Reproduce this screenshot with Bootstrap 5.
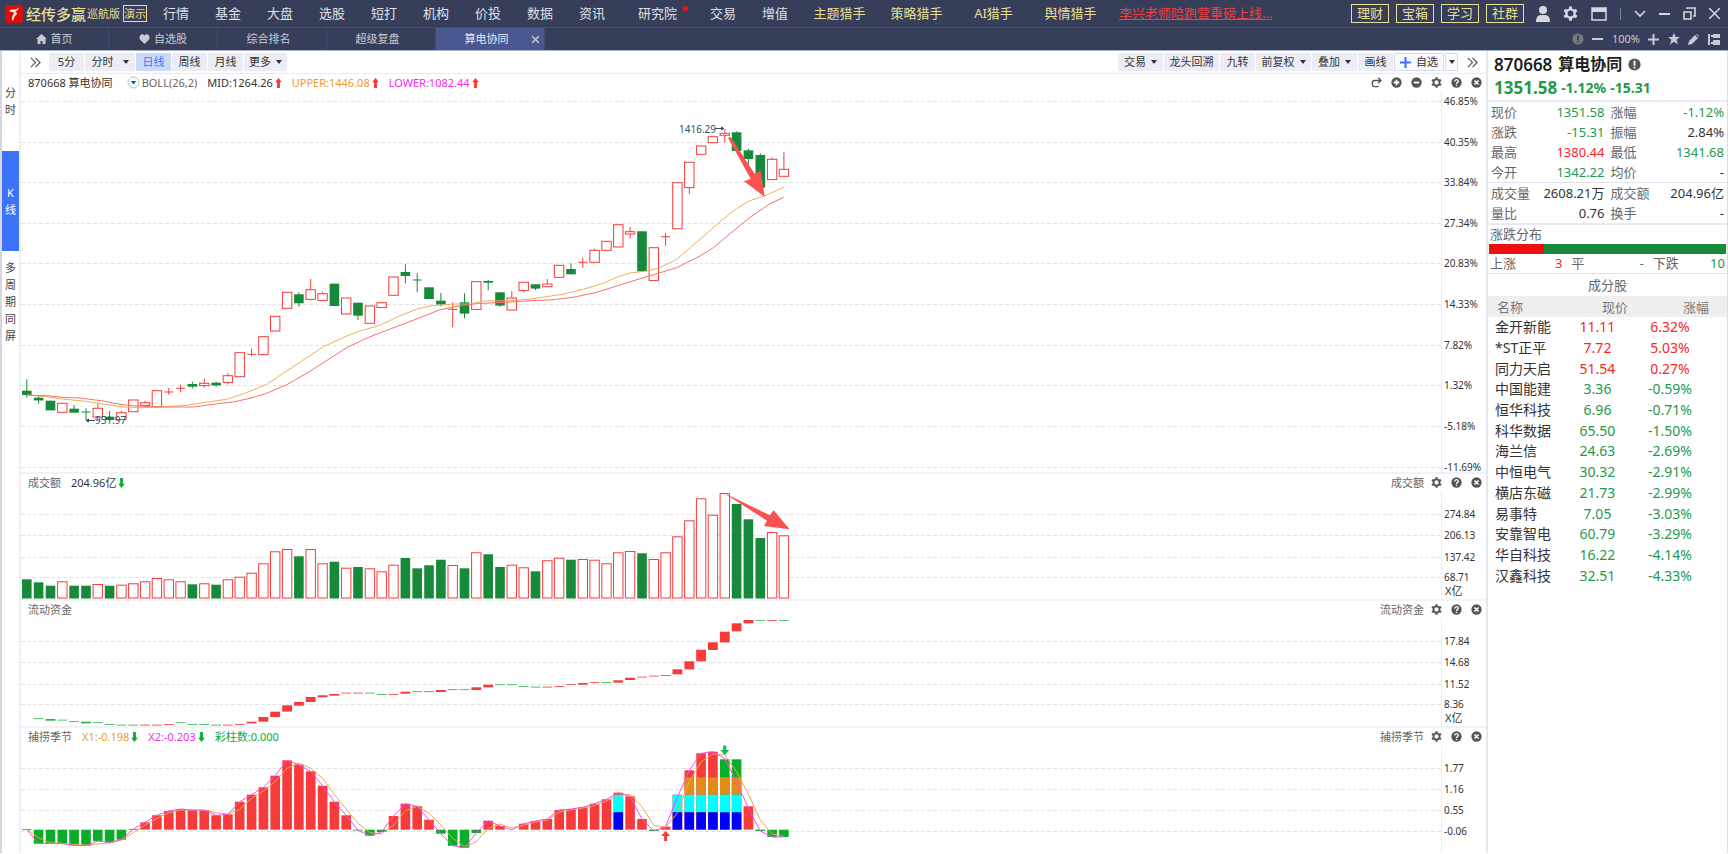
<!DOCTYPE html>
<html lang="zh-CN">
<head>
<meta charset="utf-8">
<meta name="viewport" content="width=device-width, initial-scale=1">
<title>算电协同 870668</title>
<link href="https://cdn.jsdelivr.net/npm/bootstrap@5.3.0/dist/css/bootstrap.min.css" rel="stylesheet">
<style>
  :root { --up:#f73a3a; --down:#168a3a; --navy:#373e5a; --line:#e9eaf3; --gold:#e9df93; }
  body { font-family:"Noto Sans","Noto Sans CJK SC",sans-serif; font-size:13px; line-height:20px; color:#333; background:#fff; }
  button { font-family:inherit; }
  a { text-decoration:none; }
  svg { display:block; flex-shrink:0; }
  .plain { border:0; background:none; padding:0; color:inherit; line-height:inherit; }

  .topbar { height:27px; background:var(--navy); color:#dfe1e8; }
  .topbar a { color:inherit; line-height:27px; text-align:center; }
  .brand { width:150px; padding-left:5px; color:var(--gold); white-space:nowrap; }
  .brand-name { font-size:15px; font-weight:500; margin-left:3px; }
  .brand-ed { font-size:11px; margin-left:1px; }
  .brand-demo { font-size:11px; line-height:15px; border:1px solid var(--gold); margin-left:3px; }
  .w-nav { width:52px; }
  .w-nav3 { width:79px; }
  .w-nav4 { width:77px; color:var(--gold) !important; }
  .promo { color:#ee4040 !important; text-decoration:underline; margin-left:10px; }
  .red-dot { position:absolute; top:6px; right:9px; width:5px; height:5px; border-radius:50%; background:#f01010; }
  .gold-box { gap:7px; }
  .gold-btn { width:38px; height:19px; border:1px solid var(--gold); background:none; color:var(--gold); padding:0; line-height:17px; font-size:13px; }
  .win-icons { width:204px; padding:0 8px 0 12px; color:#d6d8de; }
  .tabbar { height:24px; background:var(--navy); border-top:1px solid #414a70; border-bottom:1px solid #aab0cb; color:#c9cbd3; font-size:11px; line-height:22px; }
  .tabbar a { width:109px; color:inherit; border-right:1px solid #414a70; }
  .tabbar a.text-center { padding-right:7px; }
  .tabbar a.on { background:#4b578f; color:#e8eaf4; position:relative; }
  .tab-x { position:absolute; right:6px; top:0; }
  .tab-tools { width:160px; padding-right:8px; padding-left:4px; }

  .side { width:21px; border-left:2px solid #d5d6e0; border-right:2px solid #eeeff6; }
  .side button { height:100px; font-size:11px; line-height:17px; color:#444; display:flex; flex-direction:column; align-items:center; justify-content:center; }
  .side button.on { background:#3b74fa; color:#fff; }

  .toolbar { height:23px; border-bottom:1px solid var(--line); font-size:11px; padding-left:9px; }
  .btn-row { gap:1px; }
  .tbtn { border:0; background:#ecedf4; color:#333; height:18px; line-height:18px; padding:0; font-size:11px; white-space:nowrap; display:flex; align-items:center; justify-content:center; gap:5px; }
  .tbtn.on { background:#ccdaf9; color:#3b74fa; }
  .caret { width:0; height:0; border:3px solid transparent; border-top:4px solid #333; border-bottom:0; }
  .t35 { width:35px; } .t43 { width:43px; } .t45 { width:45px; } .t50 { width:50px; } .t55 { width:55px; } .t13 { width:13px; }
  .tbtn.framed { border:1px solid #dadce8; background:#f8f9fc; }

  .panel { border-bottom:2px solid #f2f3f8; }
  .panel:last-child { border-bottom:0; }
  .phead { height:17px; font-size:11px; line-height:17px; padding:0 4px 0 7px; color:#666; }
  .vals { gap:10px; }
  .vals > span { display:flex; align-items:center; gap:2px; }
  .picons { gap:9px; color:#555; }
  .picons .lb { margin-right:-2px; }
  .plot { flex:1 1 0; min-width:0; }
  .axis { width:45px; border-left:1px solid #eceef4; overflow:visible; }
  .h-main { height:381px; }
  .h-sub { height:108px; }
  .axis text { font-size:10px; fill:#333; }
  .axis .unit { font-size:11px; }
  .grid-ln { stroke:#e4e4e6; stroke-dasharray:4 2; }
  .note { font-size:10px; fill:#31506b; }
  .c-mid { color:#333; } .c-or { color:#eb9c2d; } .c-mg { color:#f42af0; } .c-gn { color:#0aad32; } .c-rd { color:#f33; }

  .quote { width:242px; border-left:2px solid #e6e7f0; border-right:1px solid #dcdde6; }
  .q-top { height:51px; padding:2px 6px 0; border-bottom:2px solid var(--line); }
  .q-head { gap:6px; }
  .q-code { font-size:17px; font-weight:600; line-height:23px; color:#222; }
  .q-name { font-size:16px; font-weight:600; line-height:23px; color:#222; }
  .q-price { font-size:17px; font-weight:700; line-height:23px; }
  .q-chg { font-size:14px; font-weight:700; line-height:23px; }
  .gn { color:#1f994a; } .rd { color:#fb2626; } .lb { color:#666; }
  .q-tab { width:100%; table-layout:fixed; }
  .q-tab td, .q-tab th { padding:0 3px; height:20px; line-height:20px; font-weight:400; white-space:nowrap; }
  .q-tab th { width:45px; }
  .q-tab td { text-align:right; }
  .ln1 { border-bottom:1px solid #dfe1ec; }
  .ln2 { border-bottom:2px solid var(--line); }
  .dist-title { line-height:19px; padding-left:2px; }
  .dist-bar { height:10px; margin:0 1px; background:var(--down); }
  .dist-bar div { height:10px; background:#ee1010; }
  .dist { margin:0 2px; gap:9px; height:19px; line-height:18px; }
  .cons-title { height:22px; line-height:23px; }
  .cons { width:100%; table-layout:fixed; height:290px; font-size:14px; }
  .cons th { height:21px; background:#efefef; font-size:13px; font-weight:400; color:#777; padding:0 18px 0 0; text-align:right; line-height:20px; }
  .cons th:first-child { text-align:left; padding-left:9px; }
  .cons th:nth-child(2) { padding-right:7px; }
  .cons td { padding:0; text-align:center; line-height:20px; white-space:nowrap; }
  .cons td:first-child { text-align:left; padding-left:7px; }
  .cons td:nth-child(3) { padding-right:22px; }
  .col-name { width:72px; } .col-price { width:75px; }
</style>
</head>
<body>

<svg width="0" height="0" class="position-absolute" aria-hidden="true">
  <symbol id="i-gear" viewBox="0 0 16 16"><circle cx="8" cy="8" r="4.400" fill="none" stroke="currentColor" stroke-width="2.600"/><path stroke="currentColor" stroke-width="3.200" d="M8 .4v3M8 12.600v3M1.400 4.200l2.600 1.500M12 10.300l2.600 1.500M1.400 11.800l2.600-1.500M12 5.700l2.600-1.500"/></symbol>
  <symbol id="i-plus" viewBox="0 0 16 16"><circle cx="8" cy="8" r="7.500" fill="currentColor"/><path stroke="#fff" stroke-width="2.600" d="M8 4v8M4 8h8"/></symbol>
  <symbol id="i-minus" viewBox="0 0 16 16"><circle cx="8" cy="8" r="7.500" fill="currentColor"/><path stroke="#fff" stroke-width="2.600" d="M4 8h8"/></symbol>
  <symbol id="i-close" viewBox="0 0 16 16"><circle cx="8" cy="8" r="7.500" fill="currentColor"/><path stroke="#fff" stroke-width="2.200" d="M5 5l6 6M11 5l-6 6"/></symbol>
  <symbol id="i-help" viewBox="0 0 16 16"><circle cx="8" cy="8" r="7.500" fill="currentColor"/><path fill="none" stroke="#fff" stroke-width="2" d="M5.500 6.500c0-3.500 5-3.300 5-.4C10.500 8 8 7.900 8 10M8 11.200v2"/></symbol>
  <symbol id="i-info" viewBox="0 0 16 16"><circle cx="8" cy="8" r="7.500" fill="currentColor"/><path stroke="#fff" stroke-width="2.200" d="M8 3.500v6M8 10.800v2"/></symbol>
  <symbol id="i-info-dim" viewBox="0 0 16 16"><circle cx="8" cy="8" r="7.500" fill="currentColor"/><path stroke="#373e5a" stroke-width="2.200" d="M8 3.500v6M8 10.800v2"/></symbol>
  <symbol id="i-redo" viewBox="0 0 16 16"><path fill="none" stroke="currentColor" stroke-width="2" d="M14 5H5Q2 5 2 8v3q0 3 3 3h6M10.500 1L14.500 5L10.500 9"/></symbol>
  <symbol id="i-up" viewBox="0 0 8 12"><path fill="currentColor" d="M4 0L8 5H5.700V12H2.300V5H0Z"/></symbol>
  <symbol id="i-down" viewBox="0 0 8 12"><path fill="currentColor" d="M4 12L8 7H5.700V0H2.300V7H0Z"/></symbol>
  <symbol id="i-more" viewBox="0 0 12 12"><path fill="none" stroke="currentColor" stroke-width="1.300" d="M1 1l5 5-5 5M6 1l5 5-5 5"/></symbol>
</svg>

<header>
  <nav class="topbar d-flex align-items-center text-nowrap">
    <div class="brand d-flex align-items-center">
      <svg width="18" height="18" viewBox="0 0 18 18"><rect width="18" height="18" rx="3" fill="#d90d0d"/><path d="M4 6c3-3 5 0 10-3-1 2-2 3-4 3 3 2 2 4 0 5-1 1-1 3-2 5-2-2-1-4 0-6 1-1 1-2 0-3-1 0-2 0-4-1z" fill="#fbe9c6"/></svg>
      <span class="brand-name">经传多赢</span><span class="brand-ed">巡航版</span><span class="brand-demo">演示</span>
    </div>
    <a href="#" class="w-nav">行情</a><a href="#" class="w-nav">基金</a><a href="#" class="w-nav">大盘</a><a href="#" class="w-nav">选股</a><a href="#" class="w-nav">短打</a><a href="#" class="w-nav">机构</a><a href="#" class="w-nav">价投</a><a href="#" class="w-nav">数据</a><a href="#" class="w-nav">资讯</a>
    <a href="#" class="w-nav3 position-relative">研究院<span class="red-dot"></span></a>
    <a href="#" class="w-nav">交易</a><a href="#" class="w-nav">增值</a>
    <a href="#" class="w-nav4">主题猎手</a><a href="#" class="w-nav4">策略猎手</a><a href="#" class="w-nav4">AI猎手</a><a href="#" class="w-nav4">舆情猎手</a>
    <a href="#" class="promo">李兴老师陪跑营重磅上线...</a>
    <div class="gold-box d-flex ms-auto">
      <button class="gold-btn">理财</button><button class="gold-btn">宝箱</button><button class="gold-btn">学习</button><button class="gold-btn">社群</button>
    </div>
    <div class="win-icons d-flex align-items-center justify-content-between">
      <button class="plain" aria-label="用户"><svg width="14" height="16" viewBox="0 0 14 16" fill="currentColor"><circle cx="7" cy="4" r="4"/><path d="M0 16q0-7 5-7h4q5 0 5 7z"/></svg></button>
      <button class="plain" aria-label="设置"><svg width="15" height="15"><use href="#i-gear"/></svg></button>
      <button class="plain" aria-label="窗口"><svg width="16" height="14" viewBox="0 0 16 14"><path fill="none" stroke="currentColor" stroke-width="1.500" d="M1 1h14v12H1z"/><path fill="currentColor" d="M1 1h14v4H1z"/></svg></button>
      <svg width="1" height="12"><path stroke="#777e97" stroke-width="2" d="M0 0v12"/></svg>
      <button class="plain" aria-label="展开"><svg width="12" height="8" viewBox="0 0 12 8"><path fill="none" stroke="currentColor" stroke-width="1.600" d="M1 1l5 5 5-5"/></svg></button>
      <button class="plain" aria-label="最小化"><svg width="11" height="8"><path stroke="currentColor" stroke-width="2" d="M0 4h11"/></svg></button>
      <button class="plain" aria-label="还原"><svg width="13" height="13" viewBox="0 0 13 13"><path fill="none" stroke="currentColor" stroke-width="1.600" d="M1 5h7v7H1zM4 2V1h8v8h-2"/></svg></button>
      <button class="plain" aria-label="关闭"><svg width="11" height="11" viewBox="0 0 11 11"><path stroke="currentColor" stroke-width="1.500" d="M0 0l11 11M11 0L0 11"/></svg></button>
    </div>
  </nav>
  <nav class="tabbar d-flex">
    <a href="#" class="d-flex justify-content-center align-items-center gap-1"><svg width="11" height="10" viewBox="0 0 11 10" fill="currentColor"><path d="M5.500 0L11 5H9.500v5H6.500V7h-2v3H1.500V5H0z"/></svg>首页</a>
    <a href="#" class="d-flex justify-content-center align-items-center gap-1"><svg width="11" height="10" viewBox="0 0 11 10" fill="currentColor"><path d="M5.500 10L1 5.500C-1 2 3-2 5.500 1.500 8-2 12 2 10 5.500z"/></svg>自选股</a>
    <a href="#" class="text-center">综合排名</a>
    <a href="#" class="text-center">超级复盘</a>
    <span class="position-relative d-flex"><a href="#" class="on text-center">算电协同</a><button class="plain tab-x" aria-label="关闭标签"><svg width="7" height="22" viewBox="0 0 7 22"><path stroke="currentColor" stroke-width="1.300" d="M0 8l7 7M7 8l-7 7"/></svg></button></span>
    <div class="tab-tools ms-auto d-flex align-items-center justify-content-between">
      <svg width="12" height="12" color="#77777a"><use href="#i-info-dim"/></svg>
      <button class="plain" aria-label="缩小"><svg width="11" height="8"><path stroke="currentColor" stroke-width="2" d="M0 4h11"/></svg></button>
      <span>100%</span>
      <button class="plain" aria-label="放大"><svg width="11" height="11"><path stroke="currentColor" stroke-width="2" d="M0 5.500h11M5.500 0v11"/></svg></button>
      <button class="plain" aria-label="收藏"><svg width="12" height="12" viewBox="0 0 12 12" fill="currentColor"><path d="M6 0l1.800 4H12L8.600 6.800 10 11.500 6 8.700 2 11.500 3.400 6.800 0 4h4.200z"/></svg></button>
      <button class="plain" aria-label="编辑"><svg width="11" height="11" viewBox="0 0 11 11" fill="currentColor"><path d="M0 11l1-4 6-6 3 3-6 6zM8 0h1l2 2v1z"/></svg></button>
      <button class="plain" aria-label="布局"><svg width="12" height="11" viewBox="0 0 12 11" fill="currentColor"><path d="M0 0h2v11H0zM5 0h7v4H5zM5 6h7v5H5zM3 1h2v2H3zM3 8h2v2H3z"/></svg></button>
    </div>
  </nav>
</header>

<main class="d-flex">
  <aside class="side d-flex flex-column">
    <button class="plain"><span>分</span><span>时</span></button>
    <button class="plain on"><span>K</span><span>线</span></button>
    <button class="plain"><span>多</span><span>周</span><span>期</span><span>同</span><span>屏</span></button>
  </aside>

  <section class="flex-fill" style="min-width:0">
    <div class="toolbar d-flex align-items-center">
      <svg class="me-2" width="11" height="11" color="#555"><use href="#i-more"/></svg>
      <div class="btn-row d-flex">
        <button class="tbtn t35">5分</button>
        <button class="tbtn t50">分时<i class="caret ms-1"></i></button>
        <button class="tbtn t35 on">日线</button>
        <button class="tbtn t35">周线</button>
        <button class="tbtn t35">月线</button>
        <button class="tbtn t43">更多<i class="caret"></i></button>
      </div>
      <div class="btn-row d-flex ms-auto align-items-center">
        <button class="tbtn t45">交易<i class="caret"></i></button>
        <button class="tbtn t55">龙头回溯</button>
        <button class="tbtn t35">九转</button>
        <button class="tbtn t55">前复权<i class="caret"></i></button>
        <button class="tbtn t45">叠加<i class="caret"></i></button>
        <button class="tbtn t35">画线</button>
        <button class="tbtn t50 framed"><svg width="11" height="11"><path stroke="#3b74fa" stroke-width="2" d="M0 5.500h11M5.500 0v11"/></svg>自选</button>
        <button class="tbtn t13 framed" aria-label="自选菜单"><i class="caret"></i></button>
        <svg class="ms-2 me-2" width="11" height="11" color="#555"><use href="#i-more"/></svg>
      </div>
    </div>

    <div class="panel">
      <div class="phead d-flex align-items-center">
        <div class="vals d-flex align-items-center">
          <span class="c-mid">870668 算电协同</span>
          <span><svg class="ms-1" width="13" height="13" viewBox="0 0 13 13"><circle cx="6.500" cy="6.500" r="5.500" fill="#f3fafc" stroke="#a9cbd8"/><path d="M4 5h5L6.500 8.500z" fill="#2c4a60"/></svg>BOLL(26,2)</span>
          <span class="c-mid">MID:1264.26<svg class="c-rd" width="7" height="10"><use href="#i-up"/></svg></span>
          <span class="c-or">UPPER:1446.08<svg class="c-rd" width="7" height="10"><use href="#i-up"/></svg></span>
          <span class="c-mg">LOWER:1082.44<svg class="c-rd" width="7" height="10"><use href="#i-up"/></svg></span>
        </div>
        <div class="picons d-flex ms-auto">
          <button class="plain" aria-label="重做"><svg width="11" height="11"><use href="#i-redo"/></svg></button>
          <button class="plain" aria-label="增加"><svg width="11" height="11"><use href="#i-plus"/></svg></button>
          <button class="plain" aria-label="减少"><svg width="11" height="11"><use href="#i-minus"/></svg></button>
          <button class="plain" aria-label="设置"><svg width="11" height="11"><use href="#i-gear"/></svg></button>
          <button class="plain" aria-label="帮助"><svg width="11" height="11"><use href="#i-help"/></svg></button>
          <button class="plain" aria-label="关闭"><svg width="11" height="11"><use href="#i-close"/></svg></button>
        </div>
      </div>
      <div class="d-flex"><svg class="plot h-main" id="k-plot"></svg><svg class="axis h-main" id="k-axis"></svg></div>
    </div>

    <div class="panel">
      <div class="phead d-flex align-items-center">
        <div class="vals d-flex align-items-center"><span>成交额</span><span class="c-mid">204.96亿<svg class="c-gn" width="7" height="10"><use href="#i-down"/></svg></span></div>
        <div class="picons d-flex ms-auto align-items-center"><span class="lb">成交额</span>
          <button class="plain" aria-label="设置"><svg width="11" height="11"><use href="#i-gear"/></svg></button>
          <button class="plain" aria-label="帮助"><svg width="11" height="11"><use href="#i-help"/></svg></button>
          <button class="plain" aria-label="关闭"><svg width="11" height="11"><use href="#i-close"/></svg></button>
        </div>
      </div>
      <div class="d-flex"><svg class="plot h-sub" id="v-plot"></svg><svg class="axis h-sub" id="v-axis"></svg></div>
    </div>

    <div class="panel">
      <div class="phead d-flex align-items-center">
        <span>流动资金</span>
        <div class="picons d-flex ms-auto align-items-center"><span class="lb">流动资金</span>
          <button class="plain" aria-label="设置"><svg width="11" height="11"><use href="#i-gear"/></svg></button>
          <button class="plain" aria-label="帮助"><svg width="11" height="11"><use href="#i-help"/></svg></button>
          <button class="plain" aria-label="关闭"><svg width="11" height="11"><use href="#i-close"/></svg></button>
        </div>
      </div>
      <div class="d-flex"><svg class="plot h-sub" id="f-plot"></svg><svg class="axis h-sub" id="f-axis"></svg></div>
    </div>

    <div class="panel">
      <div class="phead d-flex align-items-center">
        <div class="vals d-flex align-items-center">
          <span>捕捞季节</span>
          <span class="c-or">X1:-0.198<svg class="c-gn" width="7" height="10"><use href="#i-down"/></svg></span>
          <span class="c-mg">X2:-0.203<svg class="c-gn" width="7" height="10"><use href="#i-down"/></svg></span>
          <span class="c-gn">彩柱数:0.000</span>
        </div>
        <div class="picons d-flex ms-auto align-items-center"><span class="lb">捕捞季节</span>
          <button class="plain" aria-label="设置"><svg width="11" height="11"><use href="#i-gear"/></svg></button>
          <button class="plain" aria-label="帮助"><svg width="11" height="11"><use href="#i-help"/></svg></button>
          <button class="plain" aria-label="关闭"><svg width="11" height="11"><use href="#i-close"/></svg></button>
        </div>
      </div>
      <div class="d-flex"><svg class="plot h-sub" id="s-plot"></svg><svg class="axis h-sub" id="s-axis"></svg></div>
    </div>
  </section>

  <aside class="quote flex-shrink-0">
    <div class="q-top">
      <div class="q-head d-flex align-items-center"><span class="q-code">870668</span><span class="q-name">算电协同</span><svg width="13" height="13" color="#555"><use href="#i-info"/></svg></div>
      <div class="d-flex gap-1 gn"><span class="q-price">1351.58</span><span class="q-chg">-1.12%</span><span class="q-chg">-15.31</span></div>
    </div>
    <div class="ln1"><table class="q-tab"><tbody>
      <tr><th class="lb" scope="row">现价</th><td class="gn">1351.58</td><th class="lb" scope="row">涨幅</th><td class="gn">-1.12%</td></tr>
      <tr><th class="lb" scope="row">涨跌</th><td class="gn">-15.31</td><th class="lb" scope="row">振幅</th><td>2.84%</td></tr>
      <tr><th class="lb" scope="row">最高</th><td class="rd">1380.44</td><th class="lb" scope="row">最低</th><td class="gn">1341.68</td></tr>
      <tr><th class="lb" scope="row">今开</th><td class="gn">1342.22</td><th class="lb" scope="row">均价</th><td>-</td></tr>
    </tbody></table></div>
    <div class="ln2"><table class="q-tab"><tbody>
      <tr><th class="lb" scope="row">成交量</th><td>2608.21万</td><th class="lb" scope="row">成交额</th><td>204.96亿</td></tr>
      <tr><th class="lb" scope="row">量比</th><td>0.76</td><th class="lb" scope="row">换手</th><td>-</td></tr>
    </tbody></table></div>
    <div class="dist-title lb">涨跌分布</div>
    <div class="dist-bar"><div style="width:23%"></div></div>
    <div class="dist d-flex">
      <div class="d-flex flex-fill w-100 justify-content-between"><span class="lb">上涨</span><span class="rd">3</span></div>
      <div class="d-flex flex-fill w-100 justify-content-between"><span class="lb">平</span><span class="gn">-</span></div>
      <div class="d-flex flex-fill w-100 justify-content-between"><span class="lb">下跌</span><span class="gn">10</span></div>
    </div>
    <div class="ln1"></div>
    <div class="cons-title text-center lb">成分股</div>
    <table class="cons">
      <colgroup><col class="col-name"><col class="col-price"><col></colgroup>
      <thead><tr><th>名称</th><th>现价</th><th>涨幅</th></tr></thead>
      <tbody id="cons-body"></tbody>
    </table>
  </aside>
</main>

<script src="https://cdn.jsdelivr.net/npm/bootstrap@5.3.0/dist/js/bootstrap.bundle.min.js"></script>
<script>
const RED = '#f73a3a', GREEN = '#168a3a', LIME = '#0aad28';
const cx = i => 5.800 + 11.830 * i;
const el = id => document.getElementById(id);

// grid lines and axis labels
function frame(name, ys, labels, unit) {
  el(name + '-plot').innerHTML = ys.map(y => `<line class="grid-ln" x1="0" x2="100%" y1="${y + .5}" y2="${y + .5}"/>`).join('');
  el(name + '-axis').innerHTML = ys.map((y, i) => `<text x="2" y="${y + 4}">${labels[i]}</text>`).join('') +
    (unit ? `<text class="unit" x="3" y="104">${unit}</text>` : '');
}
const add = (name, s) => el(name + '-plot').insertAdjacentHTML('beforeend', s);
const line = (pts, c) => `<polyline fill="none" stroke="${c}" points="${pts.map(p => p.join()).join(' ')}"/>`;
const rect = (i, t, b, c, w = 9.600) => `<rect x="${(cx(i) - w / 2).toFixed(1)}" y="${t.toFixed(1)}" width="${w}" height="${Math.max(b - t, .8).toFixed(1)}" fill="${c}"/>`;
const hollow = (i, t, b) => `<rect x="${(cx(i) - 4.700).toFixed(1)}" y="${t.toFixed(1)}" width="9.400" height="${Math.max(b - t, 1).toFixed(1)}" fill="#fff" stroke="${RED}"/>`;

frame('k', [10, 51, 91, 132, 172, 213, 254, 294, 335, 376], ['46.85%', '40.35%', '33.84%', '27.34%', '20.83%', '14.33%', '7.82%', '1.32%', '-5.18%', '-11.69%']);
frame('v', [23, 44, 66, 86], ['274.84', '206.13', '137.42', '68.71'], 'X亿');
frame('f', [23, 44, 66, 86], ['17.84', '14.68', '11.52', '8.36'], 'X亿');
frame('s', [23, 44, 65, 86], ['1.77', '1.16', '0.55', '-0.06']);

// candles: direction, high, body top, body bottom, low
const K = `G898,932,945,953 G948,953,961,971 G962,962,991,991 R970,970,997,997 G975,986,998,998 G985,996,996,1020 R970,985,1011,1020 G993,1010,1020,1022 R992,998,1018,1018 R960,960,995,995 R962,968,976,976 R932,932,980,980 R924,936,936,944 R914,925,925,937 G905,912,920,925 R896,910,917,923 G905,908,916,920 R880,887,907,913 R818,818,890,890 R806,823,823,828 R770,770,824,824 R709,709,753,753 R637,637,685,685 G637,643,670,680 R597,629,658,661 R635,641,661,661 G611,611,678,678 R654,654,702,702 G668,668,707,720 R678,678,730,730 R668,668,682,682 R591,591,646,646
G553,576,588,610 G580,600,600,637 G622,622,657,657 G639,662,673,679 R667,688,688,742 G640,667,701,715 R605,605,688,688 G600,603,608,631 G637,637,677,680 R633,654,690,690 R607,607,632,637 G613,613,626,630 R597,612,620,620 R556,556,592,592 G550,567,583,583 R533,547,547,564 R506,511,547,547 R484,484,511,511 R434,434,501,501 R441,455,462,476 G454,454,574,574 R503,503,601,601 R459,470,470,498 R308,308,446,446 R247,247,323,342 R198,198,223,223 R170,170,188,188 R148,160,166,188 G154,157,213,213 G206,211,237,255 G220,225,323,323 R232,238,299,299 R215,268,289,289`.split(/\s+/);
const ky = v => (v - 33) / 3;
add('k', K.map((s, i) => {
  const up = s[0] === 'R', c = up ? RED : GREEN, [h, t, b, l] = s.slice(1).split(',').map(v => ky(+v)), x = cx(i).toFixed(1);
  const wick = `<path stroke="${c}" d="M${x} ${h.toFixed(1)}V${l.toFixed(1)}"/>`;
  if (t === b) return wick + `<path stroke="${c}" d="M${x - 4.5} ${t.toFixed(1)}h9"/>`;
  return wick + (up ? hollow(i, t, b) : rect(i, t, b, c));
}).join(''));

const MID = [[82,945],[140,950],[187,957],[258,964],[310,972],[360,980],[420,983],[480,981],[560,976],[610,968],[680,958],[720,945],[760,930],[800,913],[860,873],[920,833],[970,800],[1040,768],[1080,753],[1140,736],[1200,707],[1250,688],[1290,678],[1360,672],[1410,672],[1450,663],[1530,662],[1590,657],[1680,644],[1750,628],[1810,610],[1850,592],[1890,579],[1940,573],[1980,563],[2030,538],[2100,478],[2160,425],[2210,385],[2250,362],[2295,347],[2351,322]];
const SLOW = [[82,945],[140,947],[187,952],[240,954],[310,963],[360,973],[400,977],[470,981],[580,981],[640,973],[700,966],[750,955],[800,940],[860,914],[920,880],[970,848],[1040,803],[1110,770],[1200,736],[1260,713],[1320,689],[1380,677],[1430,671],[1530,666],[1590,662],[1650,660],[1720,652],[1790,637],[1850,618],[1920,596],[1980,578],[2030,563],[2100,528],[2140,503],[2200,453],[2250,412],[2310,371],[2351,352]];
const kp = p => [(p[0] / 3 - 21).toFixed(1), ky(p[1]).toFixed(1)];
add('k', line(MID.map(kp), '#edb054') + line(SLOW.map(kp), '#fa7070'));
add('k', `<text class="note" x="658" y="42">1416.29</text><path stroke="#31506b" d="M694 37.500h9M700 36l3 1.500-3 1.500"/>
<text class="note" x="74" y="333">951.97</text><path stroke="#31506b" d="M65 329.500h9M68 328l-3 1.500 3 1.500"/>
<path fill="#fb5151" transform="translate(379 9) scale(.3333)" d="M984 113L992 111 1064 221 1082 212 1094 290 1032 244 1052 236Z"/>`);

// turnover
const V = 'G358 G367 G377 R364 G377 G377 R372 G377 R374 R370 R364 R354 R358 R364 G373 R370 G374 R358 R350 R338 R310 R274 R267 G289 R267 R310 G305 R323 G321 R325 R334 R314 G294 G325 G316 G299 R315 G325 R277 G283 G321 R314 R322 G334 R301 R293 G299 R297 R299 R310 R277 R273 G280 R297 R277 R229 R181 R115 R164 R99 G132 G178 G234 R216 R226'.split(' ');
add('v', V.map((s, i) => {
  const t = (s.slice(1) - 93) / 3;
  return s[0] === 'R' ? hollow(i, t + .5, 107) : rect(i, t, 107.500, GREEN);
}).join('') + '<path fill="#fb5151" transform="translate(379 -31) scale(.3333)" d="M970 98L1110 166 1121 151 1169 208 1092 198 1101 182Z"/>');

// capital flow
const F = 'g775-777 g777-782 g779-781 g783-785 g785-790 g787-789 g792-794 g794-796 g794-796 r794-796 r794-796 r792-794 g787-789 g792-794 g792-794 g794-796 r794-796 r792-794 r785-790 r771-785 r755-771 r736-755 r726-737 r711-726 r706-712 r702-707 r698-700 r698-700 g698-700 g702-704 r702-704 r695-701 g694-696 r694-696 r690-696 r688-690 g688-690 r682-690 r674-682 g673-675 g673-675 g678-680 g680-682 r680-682 r678-680 r673-675 r669-674 r666-668 g666-668 r661-668 r653-660 r650-652 r647-649 r645-647 r628-643 r604-628 r569-604 r547-570 r515-547 r490-514 r480-490 g480-482 r480-482 g480-482'.split(' ');
add('f', F.map((s, i) => {
  const [t, b] = s.slice(1).split('-').map(v => (v - 474) / 3);
  return rect(i + 1, t, b, s[0] === 'r' ? RED : '#2bb24c', 9.800);
}).join(''));

// season bars, zero line at 1109
const sy = v => (v - 855) / 3;
const S = [1107,1151,1150,1151,1156,1157,1143,1147,1139,1107,1087,1066,1053,1047,1050,1050,1066,1063,1025,1004,982,947,901,914,934,977,1025,1066,1111,1127,1116,1068,1031,1039,1079,1121,1157,1163,1119,1082,1098,1110,1091,1083,1077,1050,1047,1042,1031,1018,998,1009,1077,1113,1100,1004,931,880,875,898,898,1039,1113,1131,1131];
add('s', S.map((v, i) => {
  if (i === 41) return '';
  let s = v > 1109 ? rect(i, sy(1109), sy(v), LIME) : rect(i, sy(v), sy(1109), i === 59 || i === 60 ? LIME : RED);
  if (i > 55 && i < 61) s += rect(i, sy(952), sy(1004), '#e28c17');
  if (i === 50 || (i > 54 && i < 61)) s += rect(i, sy(1004), sy(1057), '#00ffff') + rect(i, sy(1057), sy(1109), '#0000ff');
  return s;
}).join(''));
const X2 = S.slice(); X2[0] = 1109; X2[55] = 1012; X2[58] = 875; X2[59] = 896; X2[60] = 965; X2[61] = 1045;
const X1 = [1107,1133,1148,1150,1153,1155,1152,1149,1140,1118,1095,1075,1058,1050,1050,1051,1058,1062,1048,1015,993,965,925,909,925,955,1003,1047,1090,1118,1122,1095,1052,1039,1060,1095,1135,1160,1145,1105,1092,1104,1096,1086,1080,1057,1049,1044,1037,1023,1006,1003,1040,1096,1103,1058,965,905,882,885,935,1003,1080,1122,1130];
const sp = (v, i) => [cx(i).toFixed(1), sy(v).toFixed(1)];
add('s', line(X1.map(sp), '#e9a94e') + line(X2.map(sp), '#f84cf4'));
add('s', `<path fill="#17b850" d="M${cx(59)} 10l4.500-5h-3v-4.500h-3v4.500h-3z"/><path fill="${RED}" d="M${cx(54)} 86l4.500 5h-3v5h-3v-5h-3z"/>`);

// constituents
el('cons-body').innerHTML = [['金开新能','11.11','6.32%'],['*ST正平','7.72','5.03%'],['同力天启','51.54','0.27%'],['中国能建','3.36','-0.59%'],['恒华科技','6.96','-0.71%'],['科华数据','65.50','-1.50%'],['海兰信','24.63','-2.69%'],['中恒电气','30.32','-2.91%'],['横店东磁','21.73','-2.99%'],['易事特','7.05','-3.03%'],['安靠智电','60.79','-3.29%'],['华自科技','16.22','-4.14%'],['汉鑫科技','32.51','-4.33%']]
  .map(r => { const c = r[2][0] === '-' ? 'gn' : 'rd'; return `<tr><td>${r[0]}</td><td class="${c}">${r[1]}</td><td class="${c}">${r[2]}</td></tr>`; }).join('');
</script>
</body>
</html>
